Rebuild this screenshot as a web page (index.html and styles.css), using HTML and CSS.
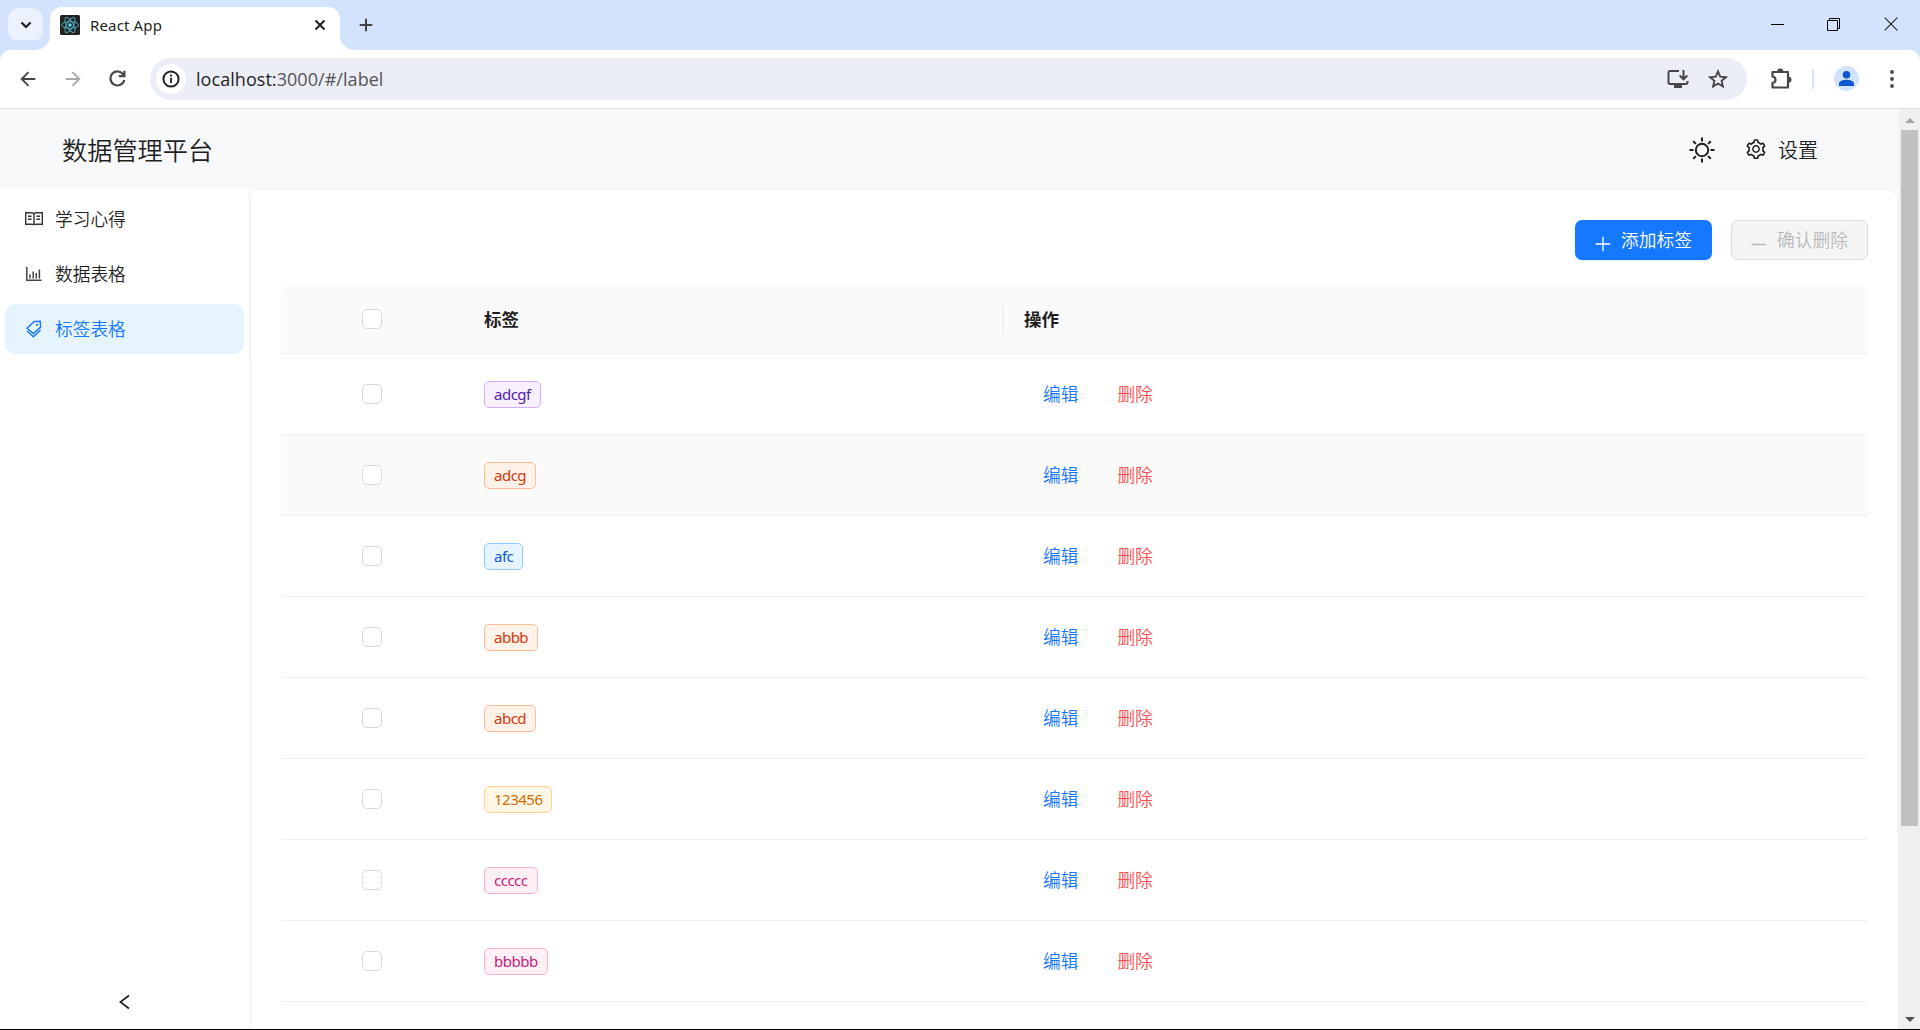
FILE: index.html
```html
<!DOCTYPE html>
<html lang="zh-CN">
<head>
<meta charset="utf-8">
<title>React App</title>
<link rel="stylesheet" href="styles.css">
</head>
<body>
<div class="window">
  <div class="tabstrip">
    <button class="tab-search"><svg width="12" height="8" viewBox="0 0 12 8"><path d="M1.5 1.5 6 6l4.500-4.500" fill="none" stroke="#1f1f1f" stroke-width="2.200"/></svg></button>
    <div class="tab">
      <svg class="favicon" width="20" height="20" viewBox="0 0 20 20"><rect width="20" height="20" rx="1.500" fill="#222"/><g fill="none" stroke="#4fa8bd" stroke-width="1"><ellipse cx="10" cy="10" rx="8.500" ry="3.300"/><ellipse cx="10" cy="10" rx="8.500" ry="3.300" transform="rotate(60 10 10)"/><ellipse cx="10" cy="10" rx="8.500" ry="3.300" transform="rotate(120 10 10)"/></g><circle cx="10" cy="10" r="1.700" fill="#61dafb"/></svg>
      <span class="tab-title">React App</span>
      <svg class="tab-close" width="12" height="12" viewBox="0 0 12 12"><path d="M1.500 1.500l9 9M10.500 1.500l-9 9" stroke="#1f1f1f" stroke-width="2"/></svg>
    </div>
    <svg class="new-tab" width="14" height="14" viewBox="0 0 14 14"><path d="M7 .7v12.600M.7 7h12.600" stroke="#444" stroke-width="2"/></svg>
    <div class="controls">
      <svg width="13" height="14" viewBox="0 0 13 14"><path d="M0 7.500h13" stroke="#000"/></svg>
      <svg width="14" height="14" viewBox="0 0 14 14"><path d="M.5 3.500h10v10H.5zM2.500 3.500V1.500H12.500v10h-2" fill="none" stroke="#000"/></svg>
      <svg width="14" height="14" viewBox="0 0 14 14"><path d="M.7.700l12.600 12.600M13.300.700L.7 13.300" stroke="#222" stroke-width="1.100"/></svg>
    </div>
  </div>
  <div class="toolbar">
    <svg width="16" height="16" viewBox="0 0 16 16"><path d="M8.500 1.200L1.700 8l6.800 6.800M1.700 8H15.300" fill="none" stroke="#474747" stroke-width="1.900"/></svg>
    <svg class="forward" width="16" height="16" viewBox="0 0 16 16"><path d="M7.500 1.200L14.300 8l-6.800 6.800M14.300 8H.7" fill="none" stroke="#aaa" stroke-width="1.900"/></svg>
    <svg class="reload" width="17" height="17" viewBox="0 0 17 17"><path d="M14.500 4.900A7 7 0 1 0 15.300 10M15.400.700v5.500H9.800" fill="none" stroke="#474747" stroke-width="2.200"/></svg>
    <div class="omnibox">
      <span class="site-info"><svg width="18" height="18" viewBox="0 0 18 18"><circle cx="9" cy="9" r="7.600" fill="none" stroke="#1f1f1f" stroke-width="2"/><path d="M9 7.800v5.200M9 4.600v2" stroke="#1f1f1f" stroke-width="1.800"/></svg></span>
      <span class="url">localhost:<i>3000/#/label</i></span>
      <svg class="install" width="22" height="20" viewBox="0 0 22 20"><path d="M12 2H3.200Q1.500 2 1.500 3.700v9.600Q1.500 15 3.200 15h15.600q1.700 0 1.700-1.700V12" fill="none" stroke="#474747" stroke-width="2"/><path d="M7 15h8v4H7z" fill="#474747"/><path d="M16.500 1v9M12.700 6.500l3.800 3.800 3.800-3.800" fill="none" stroke="#474747" stroke-width="2"/></svg>
      <svg width="20" height="20" viewBox="0 0 20 20"><path d="M10 2.400l2.200 5.300 5.700.5-4.300 3.700 1.300 5.600-4.900-3-4.900 3 1.300-5.600L2.100 8.200l5.700-.5z" fill="none" stroke="#474747" stroke-width="1.900"/></svg>
    </div>
    <svg class="extensions" width="22" height="22" viewBox="0 0 22 22"><path d="M2.500 4H18v15.500H2.500V15q3-.5 3-3.200T2.500 8.500z" fill="none" stroke="#474747" stroke-width="2.200" stroke-linejoin="round"/><path d="M7.300 3.500a3 3 0 0 1 6 0zM18.500 8.800a3 3 0 0 1 0 6z" fill="#474747"/></svg>
    <span class="divider"></span>
    <svg class="avatar" width="25" height="25" viewBox="0 0 25 25"><circle cx="12.500" cy="12.500" r="12.500" fill="#d3e3fd"/><circle cx="12.500" cy="8.700" r="3.800" fill="#0b57d0"/><path d="M5 20v-2.200c0-2.600 4-4 7.500-4s7.500 1.400 7.500 4V20z" fill="#0b57d0"/></svg>
    <svg class="more" width="4" height="18" viewBox="0 0 4 18"><g fill="#474747"><circle cx="2" cy="2" r="1.900"/><circle cx="2" cy="9" r="1.900"/><circle cx="2" cy="16" r="1.900"/></g></svg>
  </div>
  <div class="viewport">
    <div class="page">
      <header class="header">
        <h1>数据管理平台</h1>
        <svg class="sun" width="26" height="26" viewBox="0 0 26 26"><g fill="none" stroke="#1f1f1f" stroke-width="2"><circle cx="13" cy="13" r="6.200"/><path d="M13 .5v4M13 21.500v4M.5 13h4M21.500 13h4M4.200 4.200l2.700 2.700M19.100 19.100l2.700 2.700M4.200 21.800l2.700-2.700M19.100 6.900l2.700-2.700"/></g></svg>
        <div class="settings">
          <svg width="20" height="20" viewBox="64 54 896 896" fill="#1f1f1f"><path d="M924.800 625.700l-65.500-56c3.100-19 4.700-38.400 4.700-57.800s-1.600-38.800-4.700-57.800l65.500-56a32.030 32.030 0 0 0 9.300-35.200l-.9-2.600a443.740 443.740 0 0 0-79.700-137.900l-1.800-2.100a32.120 32.120 0 0 0-35.100-9.500l-81.300 28.900c-30-24.600-63.500-44-99.700-57.600l-15.700-85a32.050 32.050 0 0 0-25.800-25.700l-2.700-.5c-52.100-9.400-106.900-9.400-159 0l-2.700.5a32.050 32.050 0 0 0-25.800 25.700l-15.800 85.400a351.860 351.860 0 0 0-99 57.400l-81.900-29.100a32 32 0 0 0-35.100 9.500l-1.800 2.100a446.020 446.020 0 0 0-79.700 137.900l-.9 2.600c-4.500 12.500-.8 26.500 9.300 35.200l66.300 56.600c-3.100 18.800-4.600 38-4.600 57.100 0 19.200 1.500 38.400 4.600 57.100L99 625.500a32.030 32.030 0 0 0-9.300 35.200l.9 2.600c18.100 50.400 44.900 96.900 79.700 137.900l1.800 2.100a32.120 32.120 0 0 0 35.100 9.500l81.900-29.100c29.800 24.500 63.100 43.900 99 57.400l15.800 85.400a32.050 32.050 0 0 0 25.800 25.700l2.700.5a449.400 449.400 0 0 0 159 0l2.700-.5a32.050 32.050 0 0 0 25.800-25.700l15.700-85a350 350 0 0 0 99.700-57.600l81.300 28.900a32 32 0 0 0 35.100-9.500l1.800-2.100c34.800-41.100 61.600-87.500 79.700-137.900l.9-2.600c4.500-12.300.8-26.300-9.300-35zM788.300 465.900c2.500 15.100 3.800 30.600 3.800 46.100s-1.300 31-3.800 46.100l-6.600 40.100 74.700 63.900a370.030 370.030 0 0 1-42.600 73.600L721 702.800l-31.400 25.800c-23.900 19.600-50.500 35-79.300 45.800l-38.100 14.300-17.900 97a377.500 377.500 0 0 1-85 0l-17.900-97.200-37.800-14.500c-28.500-10.800-55-26.200-78.700-45.700l-31.400-25.900-93.400 33.200c-17-22.900-31.200-47.600-42.600-73.600l75.500-64.500-6.500-40c-2.400-14.900-3.700-30.300-3.700-45.500 0-15.300 1.200-30.600 3.700-45.500l6.500-40-75.500-64.500c11.300-26.100 25.600-50.700 42.600-73.600l93.400 33.200 31.400-25.900c23.700-19.500 50.200-34.900 78.700-45.700l37.900-14.300 17.900-97.200c28.100-3.200 56.800-3.200 85 0l17.900 97 38.100 14.300c28.700 10.800 55.400 26.200 79.300 45.800l31.400 25.800 92.800-32.900c17 22.900 31.200 47.600 42.600 73.600L781.800 426l6.500 39.900zM512 326c-97.200 0-176 78.800-176 176s78.800 176 176 176 176-78.800 176-176-78.800-176-176-176zm79.200 255.200A111.600 111.600 0 0 1 512 614c-29.900 0-58-11.700-79.200-32.800A111.600 111.600 0 0 1 400 502c0-29.900 11.700-58 32.800-79.200C454 401.600 482.100 390 512 390c29.900 0 58 11.600 79.200 32.800A111.600 111.600 0 0 1 624 502c0 29.900-11.700 58-32.800 79.200z"/></svg>
          <span>设置</span>
        </div>
      </header>
      <div class="body">
        <aside class="sider">
          <nav class="menu">
            <a class="item"><svg width="18" height="18" viewBox="0 0 18 18"><g fill="none" stroke="#333" stroke-width="1.400"><path d="M.7 2.700H6.500Q9 2.700 9 4.500q0-1.800 2.500-1.800h5.800v11.600h-5.800Q9 14.300 9 15.300q0-1-2.500-1H.7zM9 4v11M3 6.300h3.500M3 9.300h3.500M11.500 6.300H15M11.500 9.300H15"/></g></svg><span>学习心得</span></a>
            <a class="item"><svg width="18" height="18" viewBox="0 0 18 18"><path d="M1.800 2v13.200H16.500M5 9.500v4M8.200 6.500v7M11.300 8v5.500M14.400 4.500v9" fill="none" stroke="#444" stroke-width="1.500"/></svg><span>数据表格</span></a>
            <a class="item active"><svg width="18" height="18" viewBox="0 0 18 18"><g fill="none" stroke="#1677ff" stroke-width="1.400"><path d="M9.300 1.500l5.900-.3.400 5.900-7.200 6.400L2 8.300zM2.200 11l6.200 5.700 7.200-6.600"/></g><circle cx="12" cy="4.800" r="1.100" fill="#1677ff"/></svg><span>标签表格</span></a>
          </nav>
          <div class="collapse"><svg width="11" height="16" viewBox="0 0 11 16"><path d="M10 1.500L1.300 8 10 14.500" fill="none" stroke="#1f1f1f" stroke-width="1.700"/></svg></div>
        </aside>
        <main class="card">
          <div class="actions">
            <button class="btn primary"><svg width="16" height="16" viewBox="0 0 16 16"><path d="M8 .7v14.600M.7 8h14.600" stroke="#fff" stroke-width="1.300"/></svg><span>添加标签</span></button>
            <button class="btn disabled" disabled><svg width="16" height="16" viewBox="0 0 16 16"><path d="M.7 8.500h14.600" stroke="#b8b8b8" stroke-width="1.400"/></svg><span>确认删除</span></button>
          </div>
          <div class="table">
            <div class="row head"><span class="check"></span><b>标签</b><b class="op">操作</b></div>
            <div class="row"><span class="check"></span><div><span class="tag purple">adcgf</span></div><div class="links"><a>编辑</a><a class="del">删除</a></div></div>
            <div class="row hover"><span class="check"></span><div><span class="tag volcano">adcg</span></div><div class="links"><a>编辑</a><a class="del">删除</a></div></div>
            <div class="row"><span class="check"></span><div><span class="tag blue">afc</span></div><div class="links"><a>编辑</a><a class="del">删除</a></div></div>
            <div class="row"><span class="check"></span><div><span class="tag volcano">abbb</span></div><div class="links"><a>编辑</a><a class="del">删除</a></div></div>
            <div class="row"><span class="check"></span><div><span class="tag volcano">abcd</span></div><div class="links"><a>编辑</a><a class="del">删除</a></div></div>
            <div class="row"><span class="check"></span><div><span class="tag orange">123456</span></div><div class="links"><a>编辑</a><a class="del">删除</a></div></div>
            <div class="row"><span class="check"></span><div><span class="tag magenta">ccccc</span></div><div class="links"><a>编辑</a><a class="del">删除</a></div></div>
            <div class="row"><span class="check"></span><div><span class="tag magenta">bbbbb</span></div><div class="links"><a>编辑</a><a class="del">删除</a></div></div>
          </div>
        </main>
      </div>
    </div>
    <div class="scrollbar">
      <svg width="10" height="5" viewBox="0 0 10 5"><path d="M0 5L5 0l5 5z" fill="#a3a3a3"/></svg>
      <div class="thumb"></div>
      <svg class="down" width="10" height="5" viewBox="0 0 10 5"><path d="M0 0l5 5 5-5z" fill="#505050"/></svg>
    </div>
  </div>
</div>
</body>
</html>
```
FILE: styles.css
```css
* { box-sizing: border-box; }
body {
  margin: 0;
  height: 1030px;
  overflow: hidden;
  background: #fff;
  color: #1f1f1f;
  font-family: "Open Sans", "Noto Sans CJK SC", sans-serif;
  font-size: 17.5px;
}
svg { display: block; flex: none; }
button { font: inherit; border: 0; padding: 0; }
.window { height: 1030px; display: flex; flex-direction: column; border-bottom: 1px solid #000; }

.tabstrip { height: 50px; flex: none; display: flex; background: #d3e3fd; padding-left: 8px; }
.tab-search { width: 35px; height: 34px; margin-top: 8px; border-radius: 12px; background: #ebf1fe; display: flex; align-items: center; justify-content: center; }
.tab { position: relative; width: 290px; height: 43px; margin: 7px 1px 0 7px; border-radius: 12px 12px 0 0; background: #fff; display: flex; align-items: center; padding: 0 14px 7px 10px; }
.tab::before, .tab::after { content: ""; position: absolute; bottom: 0; width: 14px; height: 14px; }
.tab::before { left: -14px; background: radial-gradient(circle at 0 0, transparent 13.500px, #fff 14px); }
.tab::after { right: -14px; background: radial-gradient(circle at 100% 0, transparent 13.500px, #fff 14px); }
.tab-title { margin-left: 10px; font-family: "Noto Sans", sans-serif; font-size: 15px; letter-spacing: .15px; flex: 1; white-space: nowrap; }
.new-tab { margin: 18px 0 0 18px; }
.controls { margin-left: auto; display: flex; gap: 43px; padding: 17px 22px 0 0; }

.toolbar { height: 59px; flex: none; display: flex; align-items: center; padding: 0 26px 1px 20px; border-bottom: 1px solid #dedfdd; border-radius: 10px 10px 0 0; background: #fff; box-shadow: 0 -10px 0 #d3e3fd; }
.forward { margin-left: 29px; }
.reload { margin-left: 28px; }
.omnibox { width: 1597px; height: 42px; margin-left: 24px; border-radius: 21px; background: #ebeef7; display: flex; align-items: center; padding: 0 19px 0 6px; }
.site-info { width: 30px; height: 30px; border-radius: 50%; background: #fff; display: flex; align-items: center; justify-content: center; }
.url { margin-left: 10px; font-size: 18px; letter-spacing: .05px; color: #1f1f1f; }
.url i { font-style: normal; color: #555; }
.install { margin: 0 19px 0 auto; }
.extensions { margin-left: 23px; }
.divider { width: 2px; height: 20px; margin-left: 20px; background: #d3e3fd; }
.avatar { margin-left: 20px; }
.more { margin-left: auto; }

.viewport { flex: 1; min-height: 0; display: flex; }
.page { width: 1899px; flex: none; display: flex; flex-direction: column; }
.header { height: 80px; flex: none; display: flex; align-items: center; padding: 0 81px 0 62px; background: #f6f8fa; }
.header h1 { margin: 0 auto 0 0; font-size: 25.200px; font-weight: 350; line-height: 36px; padding-top: 1px; }
.sun { margin-top: 1px; }
.settings { display: flex; align-items: center; gap: 12px; margin-left: 31px; font-size: 20px; font-weight: 350; }
.settings span { padding-top: 3px; line-height: 28px; }
.body { flex: 1; min-height: 0; display: flex; }
.sider { width: 250px; display: flex; flex-direction: column; justify-content: space-between; }
.menu { height: 170px; display: flex; flex-direction: column; gap: 5px; padding: 5px; border-right: 1px solid #f0f0f0; }
.item { height: 50px; border-radius: 10px; display: flex; align-items: center; gap: 12px; padding-left: 20px; font-size: 17.700px; font-weight: 350; line-height: 26px; }
.item.active { background: #e6f4ff; color: #1677ff; }
.collapse { padding: 0 0 19px 119px; }
.card { flex: 1; border: 1px solid #f0f0f0; border-bottom: 0; border-radius: 10px 10px 0 0; padding: 30px 30px 0 30px; overflow: hidden; }
.actions { display: flex; justify-content: flex-end; gap: 19px; }
.btn { width: 137px; height: 40px; border-radius: 7px; display: flex; align-items: center; justify-content: center; gap: 10px; font-size: 17.700px; font-weight: 350; line-height: 24px; }
.btn svg { margin-top: 8px; }
.primary { background: #1677ff; color: #fff; box-shadow: 0 2px 0 rgba(5, 145, 255, .1); }
.disabled { background: #f5f5f5; color: #b8b8b8; border: 1px solid #d9d9d9; }
.table { margin-top: 25px; }
.row { height: 81px; display: grid; grid-template-columns: 203px 518px 1fr; align-items: center; border-bottom: 1px solid #f0f0f0; }
.head { height: 69px; background: #fafafa; border-radius: 10px 10px 0 0; }
.hover { background: #fafafa; }
.check { width: 20px; height: 20px; margin-left: 81px; border: 1px solid #d9d9d9; border-radius: 5px; background: #fff; }
.head b { font-weight: 700; line-height: 28px; }
.op { border-left: 2px solid #f0f0f0; padding-left: 20px; }
.tag { display: inline-block; vertical-align: middle; height: 27px; line-height: 25px; padding: 0 9px; border: 1px solid; border-radius: 5px; font-family: "Noto Sans", sans-serif; font-size: 15px; letter-spacing: -.5px; }
.purple { color: #531dab; background: #f9f0ff; border-color: #d3adf7; }
.volcano { color: #d4380d; background: #fff2e8; border-color: #ffbb96; }
.blue { color: #0958d9; background: #e6f4ff; border-color: #91caff; }
.orange { color: #d46b08; background: #fff7e6; border-color: #ffd591; }
.magenta { color: #c41d7f; background: #fff0f6; border-color: #ffadd2; }
.links { display: flex; gap: 39px; padding-left: 41px; font-size: 17.700px; font-weight: 350; line-height: 28px; color: #1677ff; }
.del { color: #ff4d4f; }

.scrollbar { width: 21px; background: #f0f0f0; display: flex; flex-direction: column; align-items: center; padding-top: 9px; }
.thumb { width: 17px; height: 696px; margin-top: 7px; background: #c1c1c1; }
.down { margin: auto 0 7px; }
```
